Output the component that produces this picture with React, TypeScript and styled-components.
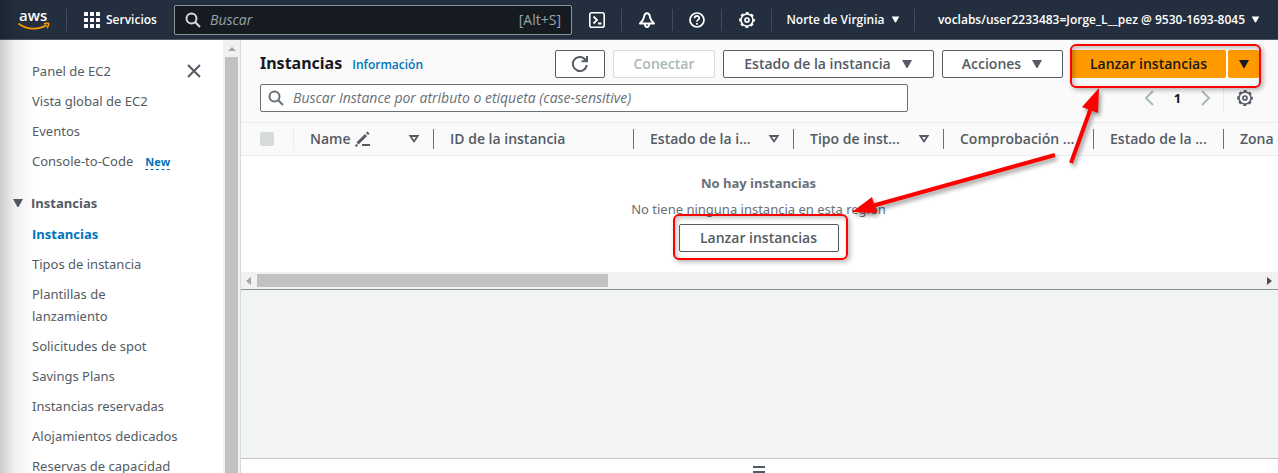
import React from "react";
import styled, { createGlobalStyle, css } from "styled-components";

const headingFont = `"Open Sans", "Noto Sans", sans-serif`;

const Global = createGlobalStyle`
  *, *::before, *::after { box-sizing: border-box; }
  body {
    margin: 0;
    font-family: "Noto Sans", "Open Sans", sans-serif;
    font-size: 13px;
    line-height: 22px;
    color: #545b64;
    background: #f2f3f3;
  }
  button, input { font: inherit; color: inherit; }
  svg { display: block; flex: none; }
`;

const Page = styled.div`
  position: relative;
  display: flex;
  flex-direction: column;
  height: 100vh;
  overflow: hidden;
`;

const EdgeShade = styled.div`
  position: absolute;
  top: 0;
  bottom: 0;
  left: 0;
  width: 36px;
  background: linear-gradient(to right, rgba(0, 0, 0, 0.2), rgba(0, 0, 0, 0.06) 40%, transparent);
  pointer-events: none;
`;

/* Top navigation */

const TopBar = styled.header`
  display: flex;
  align-items: center;
  flex: none;
  height: 40px;
  padding-right: 18px;
  background: #232f3e;
  border-bottom: 1px solid #545b64;
  color: #fff;
  font-family: ${headingFont};
  font-size: 12px;
  font-weight: 600;
`;

const LogoLink = styled.a`
  display: flex;
  width: 66px;
  padding-left: 18px;
`;

const Logo = styled.svg`
  overflow: visible;
`;

const NavButton = styled.button<{ $width?: number }>`
  display: flex;
  align-items: center;
  justify-content: center;
  gap: 6px;
  height: 24px;
  width: ${(p) => (p.$width ? `${p.$width}px` : "auto")};
  padding: 0;
  border: 0;
  background: none;
  color: #fff;
  white-space: nowrap;
`;

const NavRule = styled.span`
  flex: none;
  width: 1px;
  height: 22px;
  background: #414d5c;
`;

const GlobalSearch = styled.label`
  display: flex;
  align-items: center;
  flex: 0 1 398px;
  height: 30px;
  padding: 0 10px;
  background: #161b22;
  border: 1px solid #879596;
  border-radius: 2px;
  color: #95a5a6;
  font-size: 14px;
  font-weight: 400;
  min-width: 0;
`;

const SearchInput = styled.input`
  flex: 1;
  min-width: 0;
  padding: 0 0 0 9px;
  border: 0;
  outline: 0;
  background: none;
  &::placeholder { color: inherit; font-style: italic; opacity: 1; }
`;

const Services = styled.div`
  display: flex;
  align-items: center;
  width: 107px;
  padding-left: 17px;
`;

const Account = styled.div`
  display: flex;
  flex: 1;
  align-items: center;
  justify-content: flex-end;
`;

/* Body */

const Body = styled.div`
  display: flex;
  flex: 1;
  min-height: 0;
`;

const Sidebar = styled.aside`
  display: flex;
  flex: none;
  width: 240px;
  background: #fff;
  overflow: hidden;
`;

const Nav = styled.nav`
  flex: 1;
  padding: 20px 21px 0 32px;
`;

const NavHead = styled.div`
  display: flex;
  align-items: center;
  justify-content: space-between;
`;

const CloseButton = styled.button`
  padding: 0;
  border: 0;
  background: none;
`;

const NavList = styled.ul`
  list-style: none;
  max-width: 150px;
  margin: 0;
  padding: 0;
  & > li { margin-top: 8px; }
`;

const NavItem = styled.a<{ $active?: boolean }>`
  color: ${(p) => (p.$active ? "#0073bb" : "#545b64")};
  font-family: ${(p) => (p.$active ? headingFont : "inherit")};
  font-weight: ${(p) => (p.$active ? 700 : 400)};
  text-decoration: none;
`;

const NewTag = styled.a`
  margin-left: 12px;
  border-bottom: 1px dashed #0073bb;
  color: #0073bb;
  font-family: ${headingFont};
  font-size: 11px;
  font-weight: 700;
  text-decoration: none;
`;

const SectionToggle = styled.button`
  display: flex;
  align-items: center;
  gap: 7px;
  margin: 19px 0 9px -20px;
  padding: 0;
  border: 0;
  background: none;
  font-family: ${headingFont};
  font-weight: 700;
`;

const VScroll = styled.div`
  display: flex;
  flex-direction: column;
  align-items: center;
  width: 17px;
  padding-top: 7px;
  gap: 6px;
  background: #f1f1f1;
`;

const VThumb = styled.div`
  flex: 1;
  width: 13px;
  background: #c1c1c1;
`;

const Main = styled.main`
  display: flex;
  flex: 1;
  flex-direction: column;
  min-width: 0;
  border-left: 1px solid #d5dbdb;
`;

const Panel = styled.section`
  flex: none;
  background: #fff;
  border-bottom: 1px solid #879596;
`;

const PanelHead = styled.div`
  padding: 10px 19px;
  background: #fafafa;
  border-bottom: 1px solid #eaeded;
`;

const ActionRow = styled.div`
  display: flex;
  align-items: center;
  gap: 8px;
`;

const TitleGroup = styled.div`
  display: flex;
  flex: 1;
  align-items: baseline;
  gap: 10px;
  padding-bottom: 2px;
  font-family: ${headingFont};
`;

const Title = styled.h1`
  margin: 0;
  color: #16191f;
  font-family: "Noto Sans", sans-serif;
  font-size: 16px;
  line-height: 26px;
  font-weight: 700;
`;

const InfoLink = styled.a`
  color: #0073bb;
  font-size: 12px;
  font-weight: 600;
  text-decoration: none;
`;

const Button = styled.button<{ $width: number; $primary?: boolean }>`
  display: flex;
  align-items: center;
  justify-content: center;
  gap: 10px;
  height: 28px;
  min-width: ${(p) => p.$width}px;
  padding: 0;
  background: #fff;
  border: 1px solid #545b64;
  border-radius: 2px;
  color: #545b64;
  font-family: ${headingFont};
  font-size: 14px;
  font-weight: 600;
  white-space: nowrap;
  &:disabled { color: #aab7b8; border-color: #d5dbdb; }
  ${(p) =>
    p.$primary &&
    css`
      background: #ff9900;
      border-color: #ff9900;
      color: #16191f;
    `}
`;

const Callout = styled.div<{ $top: number; $right: number; $bottom: number; $left: number }>`
  position: relative;
  display: inline-flex;
  gap: 2px;
  &::after {
    content: "";
    position: absolute;
    top: -${(p) => p.$top}px;
    right: -${(p) => p.$right}px;
    bottom: -${(p) => p.$bottom}px;
    left: -${(p) => p.$left}px;
    border: 2px solid #f00;
    border-radius: 6px;
    box-shadow: 2px 2px 5px rgba(0, 0, 0, 0.3), inset 2px 2px 5px rgba(0, 0, 0, 0.25);
    pointer-events: none;
  }
`;

const FilterRow = styled.div`
  display: flex;
  align-items: center;
  justify-content: space-between;
  margin-top: 6px;
`;

const FilterBox = styled.label`
  display: flex;
  align-items: center;
  flex: 0 1 648px;
  height: 28px;
  padding: 0 7px;
  background: #fff;
  border: 1px solid #687078;
  border-radius: 2px;
  color: #687078;
  font-family: ${headingFont};
  font-size: 14px;
`;

const Pager = styled.div`
  display: flex;
  align-items: center;
  height: 28px;
  padding-right: 6px;
  font-weight: 700;
`;

const PageNumber = styled.span`
  width: 41px;
  color: #16191f;
  text-align: center;
`;

const IconButton = styled.button`
  padding: 0;
  border: 0;
  background: none;
`;

const PagerRule = styled.span`
  width: 1px;
  height: 28px;
  margin: 0 13px 0 11px;
  background: #eaeded;
`;

const TableClip = styled.div`
  overflow: hidden;
`;

const Table = styled.table`
  width: 1193px;
  table-layout: fixed;
  border-collapse: separate;
  border-spacing: 0;
  font-family: ${headingFont};
  font-size: 14px;
`;

const HeadCell = styled.th<{ $width: number }>`
  width: ${(p) => p.$width}px;
  height: 33px;
  padding: 0;
  background: #fafafa;
  border-bottom: 1px solid #eaeded;
  font-weight: 600;
  text-align: left;
`;

const HeadInner = styled.div<{ $faint?: boolean; $last?: boolean }>`
  display: flex;
  align-items: center;
  justify-content: space-between;
  height: 20px;
  padding: 0 13px 0 16px;
  border-right: ${(p) => (p.$last ? "0" : `1px solid ${p.$faint ? "#eaeded" : "#687078"}`)};
  line-height: 20px;
  white-space: nowrap;
`;

const HeadLabel = styled.span`
  display: flex;
  align-items: center;
  gap: 4px;
`;

const Tick = styled.input`
  appearance: none;
  width: 14px;
  height: 14px;
  margin: 0 0 0 3px;
  background: #d5dbdb;
  border-radius: 2px;
`;

const Empty = styled.div`
  display: flex;
  flex-direction: column;
  align-items: center;
  height: 116px;
  padding: 16px 2px 0 0;
  color: #687078;
`;

const EmptyTitle = styled.strong`
  margin-bottom: 4px;
  font-family: ${headingFont};
`;

const EmptyText = styled.p`
  margin: 0 0 4px;
`;

const HScroll = styled.div`
  display: flex;
  align-items: center;
  gap: 6px;
  height: 17px;
  padding: 0 6px 0 5px;
  background: #f1f1f1;
`;

const HTrack = styled.div`
  flex: 1;
  height: 13px;
`;

const HThumb = styled.div`
  width: 35%;
  height: 13px;
  background: #c1c1c1;
`;

const Backdrop = styled.div`
  flex: 1;
  background: #f2f3f3;
`;

const SplitPanel = styled.div`
  display: flex;
  justify-content: center;
  flex: none;
  height: 15px;
  padding: 7px 2px 0 0;
  background: #fff;
  border-top: 1px solid #bfc4c4;
`;

const Arrows = styled.svg`
  position: absolute;
  top: 80px;
  right: 168px;
  pointer-events: none;
  filter: drop-shadow(2px 3px 2px rgba(0, 0, 0, 0.4));
`;

/* Icons */

const Caret = ({ size = 12 }: { size?: number }) => (
  <svg width={size} height={size} viewBox="0 0 12 12" fill="currentColor">
    <path d="M1 2h10L6.500 10h-1z" />
  </svg>
);

const FilterCaret = () => (
  <svg width="12" height="12" viewBox="0 0 12 12" fill="none" stroke="#545b64" strokeWidth="1.800">
    <path d="M2.300 3h7.400L6 8.500z" />
  </svg>
);

const Magnifier = ({ size = 16, color }: { size?: number; color: string }) => (
  <svg width={size} height={size} viewBox="0 0 16 16" fill="none" stroke={color} strokeWidth="2">
    <circle cx="6.500" cy="6.500" r="5" />
    <path d="M10.200 10.200L15 15" />
  </svg>
);

const Gear = () => (
  <svg width="16" height="16" viewBox="0 0 16 16" fill="none" stroke="currentColor">
    <circle cx="8" cy="8" r="6" strokeWidth="1.600" />
    <circle cx="8" cy="8" r="7" strokeWidth="1.800" strokeDasharray="3 2.498" strokeDashoffset="1.500" />
    <circle cx="8" cy="8" r="2" strokeWidth="1.700" />
  </svg>
);

const AwsLogo = () => (
  <Logo width="32" height="22" viewBox="0 0 32 22">
    <text x="1" y="12" fill="#fff" fontSize="15" fontWeight="600">
      aws
    </text>
    <path d="M0.500 14.500C8 20.500 20 21.500 28.500 16" fill="none" stroke="#ff9900" strokeWidth="1.800" />
    <path d="M26 14.800c2-.8 4.800-.8 4.800-.2s-.6 2.800-1.800 4.400" fill="none" stroke="#ff9900" strokeWidth="1.500" />
  </Logo>
);

type Column = { label: string; full: string; width: number; filter?: boolean; edit?: boolean };

const columns: Column[] = [
  { label: "Name", full: "Name", width: 140, filter: true, edit: true },
  { label: "ID de la instancia", full: "ID de la instancia", width: 200 },
  { label: "Estado de la i...", full: "Estado de la instancia", width: 160, filter: true },
  { label: "Tipo de inst...", full: "Tipo de instancia", width: 150, filter: true },
  { label: "Comprobación ...", full: "Comprobación de estado", width: 150 },
  { label: "Estado de la ...", full: "Estado de la alarma", width: 130 },
  { label: "Zona de disponibilidad", full: "Zona de disponibilidad", width: 210 },
];

const links = [
  "Tipos de instancia",
  "Plantillas de lanzamiento",
  "Solicitudes de spot",
  "Savings Plans",
  "Instancias reservadas",
  "Alojamientos dedicados",
  "Reservas de capacidad",
];

export default function App() {
  return (
    <Page>
      <Global />
      <TopBar>
        <LogoLink href="#" aria-label="AWS">
          <AwsLogo />
        </LogoLink>
        <NavRule />
        <Services>
          <NavButton>
            <svg width="16" height="16" viewBox="0 0 16 16" fill="#fff">
              {[0, 6, 12].map((y) => [0, 6, 12].map((x) => <rect key={`${x}-${y}`} x={x} y={y} width="4" height="4" rx="0.500" />))}
            </svg>
            Servicios
          </NavButton>
        </Services>
        <GlobalSearch>
          <Magnifier color="#d5dbdb" />
          <SearchInput placeholder="Buscar" aria-label="Buscar" />
          <span>[Alt+S]</span>
        </GlobalSearch>
        <NavButton $width={49} aria-label="CloudShell">
          <svg width="16" height="16" viewBox="0 0 16 16" fill="none" stroke="#fff">
            <rect x="0.800" y="0.800" width="14.400" height="14.400" rx="2" strokeWidth="1.600" />
            <path d="M4.500 4.500L8 8l-3.500 3.500M9 11.500h3.500" strokeWidth="1.800" />
          </svg>
        </NavButton>
        <NavRule />
        <NavButton $width={50} aria-label="Notificaciones">
          <svg width="16" height="16" viewBox="0 0 16 16" fill="none" stroke="#fff" strokeWidth="1.900">
            <path d="M8 1.200C5.500 1.200 5.200 3.500 4.900 5.500 4.500 8 3 9.500 1 11.500h14C13 9.500 11.500 8 11.100 5.500 10.800 3.500 10.500 1.200 8 1.200z" strokeLinejoin="round" />
            <path d="M5.800 11.500c0 4.700 4.400 4.700 4.400 0" />
          </svg>
        </NavButton>
        <NavRule />
        <NavButton $width={48} aria-label="Ayuda">
          <svg width="16" height="16" viewBox="0 0 16 16" fill="none" stroke="#fff" strokeWidth="1.700">
            <circle cx="8" cy="8" r="7" />
            <path d="M5.500 6.300C5.700 3 10.500 3.400 10.300 6.100 10.200 7.700 8 7.700 8 9.800M8 11v1.700" />
          </svg>
        </NavButton>
        <NavRule />
        <NavButton $width={49} aria-label="Configuración">
          <Gear />
        </NavButton>
        <NavRule />
        <NavButton $width={142}>
          Norte de Virginia <Caret size={9} />
        </NavButton>
        <NavRule />
        <Account>
          <NavButton>
            voclabs/user2233483=Jorge_L__pez @ 9530-1693-8045 <Caret size={9} />
          </NavButton>
        </Account>
      </TopBar>

      <Body>
        <Sidebar>
          <Nav>
            <NavHead>
              <NavItem href="#">Panel de EC2</NavItem>
              <CloseButton aria-label="Cerrar">
                <svg width="16" height="16" viewBox="0 0 16 16" stroke="#545b64" strokeWidth="2">
                  <path d="M2 2l12 12M14 2L2 14" />
                </svg>
              </CloseButton>
            </NavHead>
            <NavList>
              <li><NavItem href="#">Vista global de EC2</NavItem></li>
              <li><NavItem href="#">Eventos</NavItem></li>
              <li>
                <NavItem href="#">Console-to-Code</NavItem>
                <NewTag href="#">New</NewTag>
              </li>
            </NavList>
            <SectionToggle aria-expanded="true">
              <Caret />
              Instancias
            </SectionToggle>
            <NavList>
              <li><NavItem href="#" $active>Instancias</NavItem></li>
              {links.map((l) => (
                <li key={l}><NavItem href="#">{l}</NavItem></li>
              ))}
            </NavList>
          </Nav>
          <VScroll>
            <svg width="8" height="4" viewBox="0 0 8 4" fill="#a3a3a3"><path d="M0 4l4-4 4 4z" /></svg>
            <VThumb />
          </VScroll>
        </Sidebar>

        <Main>
          <Panel>
            <PanelHead>
              <ActionRow>
                <TitleGroup>
                  <Title>Instancias</Title>
                  <InfoLink href="#">Información</InfoLink>
                </TitleGroup>
                <Button $width={50} aria-label="Actualizar">
                  <svg width="16" height="16" viewBox="0 0 16 16" fill="none" stroke="currentColor" strokeWidth="2">
                    <path d="M14.800 9A7 7 0 1 1 13 3.200L14.500 5M15 0v5.200H9.500" />
                  </svg>
                </Button>
                <Button $width={102} disabled>Conectar</Button>
                <Button $width={211}>Estado de la instancia <Caret /></Button>
                <Button $width={121}>Acciones <Caret /></Button>
                <Callout $top={6} $right={2} $bottom={10} $left={1}>
                  <Button $width={155} $primary>Lanzar instancias</Button>
                  <Button $width={31} $primary aria-label="Más opciones"><Caret /></Button>
                </Callout>
              </ActionRow>
              <FilterRow>
                <FilterBox>
                  <Magnifier color="#687078" />
                  <SearchInput placeholder="Buscar Instance por atributo o etiqueta (case-sensitive)" aria-label="Buscar instancias" />
                </FilterBox>
                <Pager>
                  <IconButton aria-label="Anterior">
                    <svg width="14" height="16" viewBox="0 0 14 16" fill="none" stroke="#aab7b8" strokeWidth="2"><path d="M10 1L3 8l7 7" /></svg>
                  </IconButton>
                  <PageNumber>1</PageNumber>
                  <IconButton aria-label="Siguiente">
                    <svg width="14" height="16" viewBox="0 0 14 16" fill="none" stroke="#aab7b8" strokeWidth="2"><path d="M4 1l7 7-7 7" /></svg>
                  </IconButton>
                  <PagerRule />
                  <IconButton aria-label="Preferencias"><Gear /></IconButton>
                </Pager>
              </FilterRow>
            </PanelHead>
            <TableClip>
              <Table>
                <thead>
                  <tr>
                    <HeadCell $width={53}>
                      <HeadInner $faint>
                        <Tick type="checkbox" disabled aria-label="Seleccionar todo" />
                      </HeadInner>
                    </HeadCell>
                    {columns.map((c, i) => (
                      <HeadCell key={c.full} $width={c.width} title={c.full}>
                        <HeadInner $last={i === columns.length - 1}>
                          <HeadLabel>
                            {c.label}
                            {c.edit && (
                              <svg width="16" height="16" viewBox="0 0 16 16" fill="none" stroke="#545b64">
                                <path d="M2.500 12.500L11 4M12 3l1.500-1.500" strokeWidth="3" />
                                <path d="M0.500 15l2-1M7 14h8" strokeWidth="2" />
                              </svg>
                            )}
                          </HeadLabel>
                          {c.filter && <FilterCaret />}
                        </HeadInner>
                      </HeadCell>
                    ))}
                  </tr>
                </thead>
              </Table>
            </TableClip>
            <Empty>
              <EmptyTitle>No hay instancias</EmptyTitle>
              <EmptyText>No tiene ninguna instancia en esta región</EmptyText>
              <Callout $top={10} $right={9} $bottom={8} $left={6}>
                <Button $width={160}>Lanzar instancias</Button>
              </Callout>
            </Empty>
            <HScroll>
              <svg width="5" height="8" viewBox="0 0 5 8" fill="#a3a3a3"><path d="M5 0v8L0 4z" /></svg>
              <HTrack><HThumb /></HTrack>
              <svg width="5" height="8" viewBox="0 0 5 8" fill="#505050"><path d="M0 0v8l5-4z" /></svg>
            </HScroll>
          </Panel>
          <Backdrop />
          <SplitPanel>
            <svg width="12" height="7" viewBox="0 0 12 7" fill="#545b64"><path d="M0 0h12v2H0zM0 5h12v2H0z" /></svg>
          </SplitPanel>
        </Main>
      </Body>

      <Arrows width="260" height="140" viewBox="850 80 260 140">
        <g fill="#f00" stroke="#f00">
          <path d="M1055 155L872 206" strokeWidth="4" />
          <path d="M852 212l20-15 5 16z" stroke="none" />
          <path d="M1071 163L1092 105" strokeWidth="4" />
          <path d="M1099 88l-17 19 16 6z" stroke="none" />
        </g>
      </Arrows>
      <EdgeShade />
    </Page>
  );
}
